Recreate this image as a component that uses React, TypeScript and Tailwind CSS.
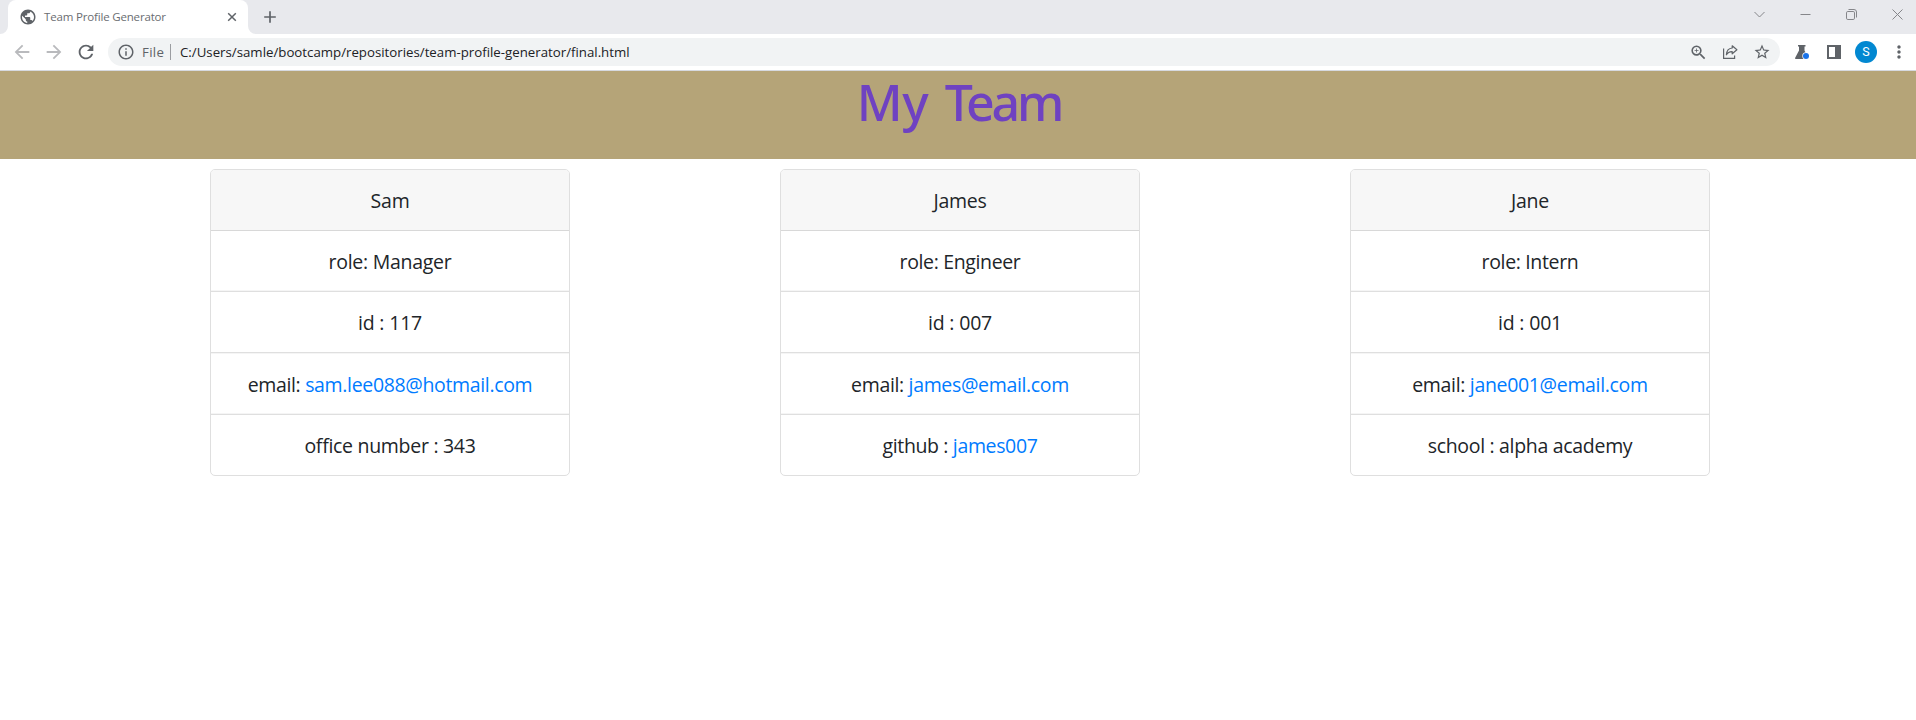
import type { ReactNode } from "react";
import {
  MdArrowBack,
  MdArrowForward,
  MdInfoOutline,
  MdMoreVert,
  MdPublic,
  MdRefresh,
  MdStarBorder,
  MdZoomIn,
} from "react-icons/md";

type Line = { label: string; link?: string; tracking: string };
type Member = { name: string; tracking: string; lines: Line[] };

const members: Member[] = [
  {
    name: "Sam",
    tracking: "tracking-[-0.2px]",
    lines: [
      { label: "role: Manager", tracking: "tracking-[-0.27px]" },
      { label: "id : 117", tracking: "tracking-[-0.17px]" },
      { label: "email: ", link: "sam.lee088@hotmail.com", tracking: "tracking-[-0.34px]" },
      { label: "office number : 343", tracking: "tracking-[-0.29px]" },
    ],
  },
  {
    name: "James",
    tracking: "tracking-[-0.3px]",
    lines: [
      { label: "role: Engineer", tracking: "tracking-[-0.36px]" },
      { label: "id : 007", tracking: "tracking-[-0.17px]" },
      { label: "email: ", link: "james@email.com", tracking: "tracking-[-0.34px]" },
      { label: "github : ", link: "james007", tracking: "tracking-[-0.36px]" },
    ],
  },
  {
    name: "Jane",
    tracking: "tracking-[-0.3px]",
    lines: [
      { label: "role: Intern", tracking: "tracking-[-0.35px]" },
      { label: "id : 001", tracking: "tracking-[-0.17px]" },
      { label: "email: ", link: "jane001@email.com", tracking: "tracking-[-0.33px]" },
      { label: "school : alpha academy", tracking: "tracking-[-0.31px]" },
    ],
  },
];

const rowStyles = [
  "h-[61px] border-b leading-[61px] shadow-[inset_0_-1px_0_#f5f5f5]",
  "h-[61px] border-b leading-[61px]",
  "h-[62px] border-b leading-[63px] shadow-[inset_0_1px_0_#f5f5f5,inset_0_-1px_0_#f5f5f5]",
  "h-[60px] leading-[61px]",
];

function Slot({ className, children }: { className: string; children: ReactNode }) {
  return <div className={`flex shrink-0 items-center justify-center ${className}`}>{children}</div>;
}

function TabStrip() {
  return (
    <div className="flex h-[34px] items-end bg-[#e8e9ed]">
      <svg className="size-2 shrink-0" viewBox="0 0 8 8">
        <path d="M8 0A8 8 0 0 1 0 8H8Z" fill="#fff" />
      </svg>
      <div className="flex h-[34px] w-60 items-center rounded-t-lg bg-white pl-[11px] pr-[11px]">
        <MdPublic className="size-[18px] shrink-0 text-[#5f6368]" />
        <span className="ml-[7px] flex-1 whitespace-nowrap text-[11.5px] leading-[34px] tracking-[-0.17px] text-[#6a6d71]">
          Team Profile Generator
        </span>
        <svg className="size-[10px] shrink-0" viewBox="0 0 10 10" fill="none" stroke="#5f6368" strokeWidth="1.5">
          <path d="M1.2 1.2l7.6 7.6M8.8 1.2l-7.6 7.6" />
        </svg>
      </div>
      <svg className="size-2 shrink-0" viewBox="0 0 8 8">
        <path d="M0 0A8 8 0 0 0 8 8H0Z" fill="#fff" />
      </svg>
      <Slot className="ml-2 h-[34px] w-3">
        <svg className="size-3" viewBox="0 0 12 12" stroke="#5f6368" strokeWidth="1.7">
          <path d="M6 .2v11.6M.2 6h11.6" />
        </svg>
      </Slot>
      <div className="ml-auto flex h-[29px] items-center gap-[35px] self-start pr-[13px] text-[#85868a]">
        <svg className="h-[7px] w-[11px]" viewBox="0 0 11 7" fill="none" stroke="currentColor">
          <path d="M.5 1l5 5 5-5" />
        </svg>
        <svg className="size-[11px]" viewBox="0 0 11 11" fill="none" stroke="currentColor">
          <path d="M.5 5.5h10" />
        </svg>
        <svg className="size-[11px]" viewBox="0 0 11 11" fill="none" stroke="currentColor">
          <rect x=".5" y="2.5" width="8" height="8" rx="1.3" />
          <path d="M2.5.5H8a2.5 2.5 0 0 1 2.5 2.5v5.5" />
        </svg>
        <svg className="size-[11px]" viewBox="0 0 11 11" fill="none" stroke="currentColor">
          <path d="M.5.5l10 10M10.5.5l-10 10" />
        </svg>
      </div>
    </div>
  );
}

function Toolbar() {
  return (
    <div className="flex h-[37px] items-center border-b border-[#d6d9e0] bg-white text-[#5f6368]">
      <Slot className="ml-[11px] size-[22px]">
        <MdArrowBack className="size-[22px] text-[#b9babd]" />
      </Slot>
      <Slot className="ml-[10px] size-[22px]">
        <MdArrowForward className="size-[22px] text-[#b9babd]" />
      </Slot>
      <Slot className="ml-[10px] size-[22px]">
        <MdRefresh className="size-[22px]" />
      </Slot>
      <div className="ml-[11px] flex h-7 w-[1672px] items-center rounded-full bg-[#f1f3f4] pl-[9px]">
        <MdInfoOutline className="size-[18px] shrink-0" />
        <span className="ml-[7px] w-[28px] pt-px text-[13.25px] tracking-[0.3px]">File</span>
        <span className="h-4 w-px bg-[#9b9da1]" />
        <span className="ml-[9px] flex-1 whitespace-nowrap pt-px text-[13.25px] text-[#202124]">
          C:/Users/samle/bootcamp/repositories/team-profile-generator/final.html
        </span>
        <Slot className="w-8">
          <MdZoomIn className="size-[19px]" />
        </Slot>
        <Slot className="w-8">
          <svg className="size-4" viewBox="0 0 16 16" fill="none" stroke="currentColor" strokeWidth="1.2">
            <path d="M1.6 4.5v9.9h11v-2.8" />
            <path
              d="M10.2 1.8l4.7 4-4.7 4V7.6C7.6 7.5 5.6 8.6 4.4 10.8c.2-3.6 2-6.5 5.8-6.8z"
              strokeLinejoin="round"
            />
          </svg>
        </Slot>
        <Slot className="w-8">
          <MdStarBorder className="size-[18px]" />
        </Slot>
        <span className="w-[2px]" />
      </div>
      <Slot className="ml-[14px] size-4">
        <svg className="size-4" viewBox="0 0 16 16">
          <path
            d="M4 1h7.5v1.6h-1V6.5l3.9 7.3c.3.6 0 1.200-.7 1.200H2c-.8 0-1.200-.7-.8-1.300L5 6.500V2.600H4z"
            fill="#5f6368"
          />
          <circle cx="12" cy="12" r="3.7" fill="#fff" />
          <circle cx="12" cy="12" r="3" fill="#1a73e8" />
        </svg>
      </Slot>
      <svg className="ml-[17px] h-[14px] w-[14px]" viewBox="0 0 14 14">
        <path d="M0 0h14v14H0zM2 2v10h6V2z" fill="#5f6368" fillRule="evenodd" />
      </svg>
      <div className="ml-[14px] flex size-[22px] items-center justify-center rounded-full bg-[#0288d1] font-['Roboto',sans-serif] text-[12.5px] leading-none text-white">
        S
      </div>
      <Slot className="ml-[11px] w-[21px]">
        <MdMoreVert className="size-5" />
      </Slot>
    </div>
  );
}

function TeamCard({ member }: { member: Member }) {
  return (
    <article className="w-[360px] overflow-hidden rounded-[5px] border border-[#dfdfdf] text-center text-[19.5px] text-[#212529]">
      <h2 className={`h-[61px] border-b border-[#d8d8d8] bg-[#f7f7f7] pt-px leading-[60px] ${member.tracking}`}>
        {member.name}
      </h2>
      <ul>
        {member.lines.map((line, i) => (
          <li key={line.label} className={`whitespace-pre border-[#dfdfdf] ${rowStyles[i]} ${line.tracking}`}>
            {line.label}
            {line.link && (
              <a href="#" className="text-[#007bff]">
                {line.link}
              </a>
            )}
          </li>
        ))}
      </ul>
    </article>
  );
}

export default function App() {
  return (
    <div className="h-[720px] w-[1916px] overflow-hidden bg-white font-['Open_Sans','Noto_Sans',sans-serif]">
      <TabStrip />
      <Toolbar />
      <header className="h-[88px] bg-[#b5a478] pt-px text-center">
        <h1 className="pl-0.5 font-['Noto_Sans',sans-serif] text-[50px] font-medium leading-[60px] text-[#6f42c1] [word-spacing:4px]">
          <span className="tracking-[-0.5px]">My </span>
          <span className="tracking-[-3.2px]">Team</span>
        </h1>
      </header>
      <main className="flex items-start gap-[210px] pl-[210px] pt-[10px]">
        {members.map((m) => (
          <TeamCard key={m.name} member={m} />
        ))}
      </main>
    </div>
  );
}
